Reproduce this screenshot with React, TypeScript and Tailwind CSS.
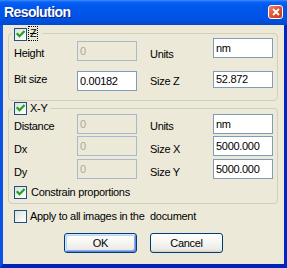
import React from "react";

const font = { fontFamily: '"Liberation Sans", Arial, sans-serif' };

function Check({ checked }: { checked: boolean }) {
  return (
    <div className="w-[13px] h-[13px] shrink-0 border border-[#1C5180] bg-[linear-gradient(135deg,#DCDCD7_0%,#F4F4F0_60%,#FFFFFF_100%)] flex items-center justify-center">
      {checked && (
        <svg width="11" height="11" viewBox="0 0 11 11">
          <path d="M2.5 5 L4.5 7.2 L8.8 2.8" fill="none" stroke="#21A121" strokeWidth="2.2" strokeLinecap="square" />
        </svg>
      )}
    </div>
  );
}

function Field({ value, disabled, h = 20 }: { value: string; disabled?: boolean; h?: number }) {
  return (
    <div
      className={
        "w-[60px] flex items-center pl-[2px] border " +
        (disabled ? "border-[#A9B8CB] bg-[#ECE9D8] text-[#ACA899]" : "border-[#7F9DB9] bg-white text-black")
      }
      style={{ height: h }}
    >
      {value}
    </div>
  );
}

export default function App() {
  return (
    <div className="w-[287px] h-[268px] flex flex-col text-[11px] leading-[13px] tracking-[-0.3px] text-black select-none" style={font}>
      {/* Title bar */}
      <div className="h-[25px] shrink-0 flex items-start justify-between bg-[linear-gradient(to_bottom,#3D8FFF_0px,#0A62F5_2px,#0058EE_6px,#0055E8_16px,#004ED9_22px,#0047CF_25px)]">
        <div className="mt-[4px] ml-[4px] text-white font-bold text-[14px] leading-[16px] tracking-[-0.6px] [text-shadow:1px_1px_0_#0A1E80]">
          Resolution
        </div>
        <div className="mt-[5px] mr-[4px] w-[15px] h-[14px] rounded-[3px] border border-white bg-[linear-gradient(135deg,#F0876A,#E0502C_50%,#C8381A)] flex items-center justify-center">
          <svg width="8" height="8" viewBox="0 0 8 8">
            <path d="M1 1 L7 7 M7 1 L1 7" stroke="white" strokeWidth="1.8" />
          </svg>
        </div>
      </div>

      {/* Body */}
      <div className="flex-1 flex flex-col bg-[#ECE9D8] border-l-[3px] border-l-[#0B52E6] border-r-[3px] border-r-[#0027C6] border-b-[4px] border-b-[#0023B8]">
        {/* Group Z */}
        <div className="relative mt-[8px] ml-[5px] w-[270px] border border-[#D0D0BF] rounded-[4px] pl-[5px] pb-[9px]">
          <div className="absolute -top-[7px] left-[3px] flex items-center gap-[1px] bg-[#ECE9D8] pl-[2px] pr-[4px]">
            <Check checked />
            <div className="-mt-[1px] h-[15px] px-[1px] border border-dotted border-black flex items-center">
              <span className="line-through">Z</span>
            </div>
          </div>
          <div className="flex items-start">
            <div className="w-[63px] mt-[13px]">Height</div>
            <div className="mt-[7px]"><Field value="0" disabled /></div>
            <div className="w-[63px] ml-[13px] mt-[14px]">Units</div>
            <div className="mt-[4px]"><Field value="nm" /></div>
          </div>
          <div className="flex items-start">
            <div className="w-[63px] mt-[12px]">Bit size</div>
            <div className="mt-[10px]"><Field value="0.00182" /></div>
            <div className="w-[63px] ml-[13px] mt-[14px]">Size Z</div>
            <div className="mt-[10px]"><Field value="52.872" h={17} /></div>
          </div>
        </div>

        {/* Group X-Y */}
        <div className="relative mt-[7px] ml-[5px] w-[270px] border border-[#D0D0BF] rounded-[4px] pl-[5px] pt-[5px] pb-[4px]">
          <div className="absolute -top-[7px] left-[3px] flex items-center gap-[3px] bg-[#ECE9D8] pl-[2px] pr-[3px]">
            <Check checked />
            <span>X-Y</span>
          </div>
          <div className="flex items-start">
            <div className="w-[63px] mt-[6px]">Distance</div>
            <Field value="0" disabled />
            <div className="w-[63px] ml-[13px] mt-[6px]">Units</div>
            <Field value="nm" />
          </div>
          <div className="flex items-start mt-[2px]">
            <div className="w-[63px] mt-[7px]">Dx</div>
            <Field value="0" disabled />
            <div className="w-[63px] ml-[13px] mt-[7px]">Size X</div>
            <Field value="5000.000" />
          </div>
          <div className="flex items-start mt-[3px]">
            <div className="w-[63px] mt-[7px]">Dy</div>
            <Field value="0" disabled />
            <div className="w-[63px] ml-[13px] mt-[7px]">Size Y</div>
            <Field value="5000.000" />
          </div>
          <div className="flex items-center gap-[4px] mt-[7px]">
            <Check checked />
            <span>Constrain proportions</span>
          </div>
        </div>

        {/* Apply */}
        <div className="flex items-center gap-[3px] mt-[6px] ml-[11px]">
          <Check checked={false} />
          <span className="whitespace-pre">Apply to all images in the  document</span>
        </div>

        {/* Buttons */}
        <div className="flex gap-[13px] mt-[10px] ml-[61px]">
          <div className="w-[73px] h-[20px] rounded-[3px] border border-[#003C74] bg-[linear-gradient(to_bottom,#FFFFFF_0%,#F5F5F1_50%,#ECEBE6_85%,#DCD8CC_100%)] shadow-[inset_1px_1px_0_#CEE7FF,inset_-1px_-1px_0_#6982EE,inset_2px_2px_0_#BCD4F6,inset_-2px_-2px_0_#89ADE4] flex items-center justify-center">
            OK
          </div>
          <div className="w-[73px] h-[20px] rounded-[3px] border border-[#003C74] bg-[linear-gradient(to_bottom,#FFFFFF_0%,#F5F5F1_50%,#ECEBE6_85%,#D6D0C5_100%)] flex items-center justify-center">
            Cancel
          </div>
        </div>
      </div>
    </div>
  );
}
